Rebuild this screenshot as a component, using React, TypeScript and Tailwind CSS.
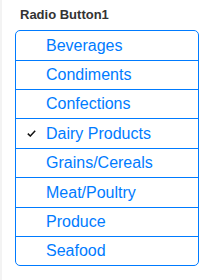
const items = [
  { name: "Beverages", h: "h-[30px]" },
  { name: "Condiments", h: "h-[29px]" },
  { name: "Confections", h: "h-[29px]" },
  { name: "Dairy Products", h: "h-[30px]" },
  { name: "Grains/Cereals", h: "h-[29px]" },
  { name: "Meat/Poultry", h: "h-[30px]" },
  { name: "Produce", h: "h-[29px]" },
  { name: "Seafood", h: "h-[28px]" },
];

export default function App() {
  const selected = "Dairy Products";

  return (
    <div className="flex h-[280px] w-[213px] bg-white font-['Liberation_Sans',Arial,sans-serif]">
      <div className="w-[2px] shrink-0 bg-[#f3f3f3]" />
      <div className="flex w-[184px] flex-col pl-[13px]">
        <div className="pl-[5px] pt-[7px] text-[13px] font-bold leading-[15px] text-[#333]">Radio Button1</div>
        <ul className="mt-[8px] w-[184px] overflow-hidden rounded-[5px] border border-[#007bff]">
          {items.map((item, i) => (
            <li
              key={item.name}
              className={`flex ${item.h} items-center ${i < items.length - 1 ? "border-b border-[#007bff]" : ""}`}
            >
              <span className="flex w-[30px] shrink-0 justify-end pr-[10px]">
                {item.name === selected && (
                  <svg width="9" height="7" viewBox="0 0 9 7" fill="none">
                    <path d="M0.8 3.6 L3.3 6 L8.2 0.8" stroke="#111" strokeWidth="1.5" />
                  </svg>
                )}
              </span>
              <span className="text-[16px] leading-[18px] text-[#007bff]">{item.name}</span>
            </li>
          ))}
        </ul>
      </div>
    </div>
  );
}
